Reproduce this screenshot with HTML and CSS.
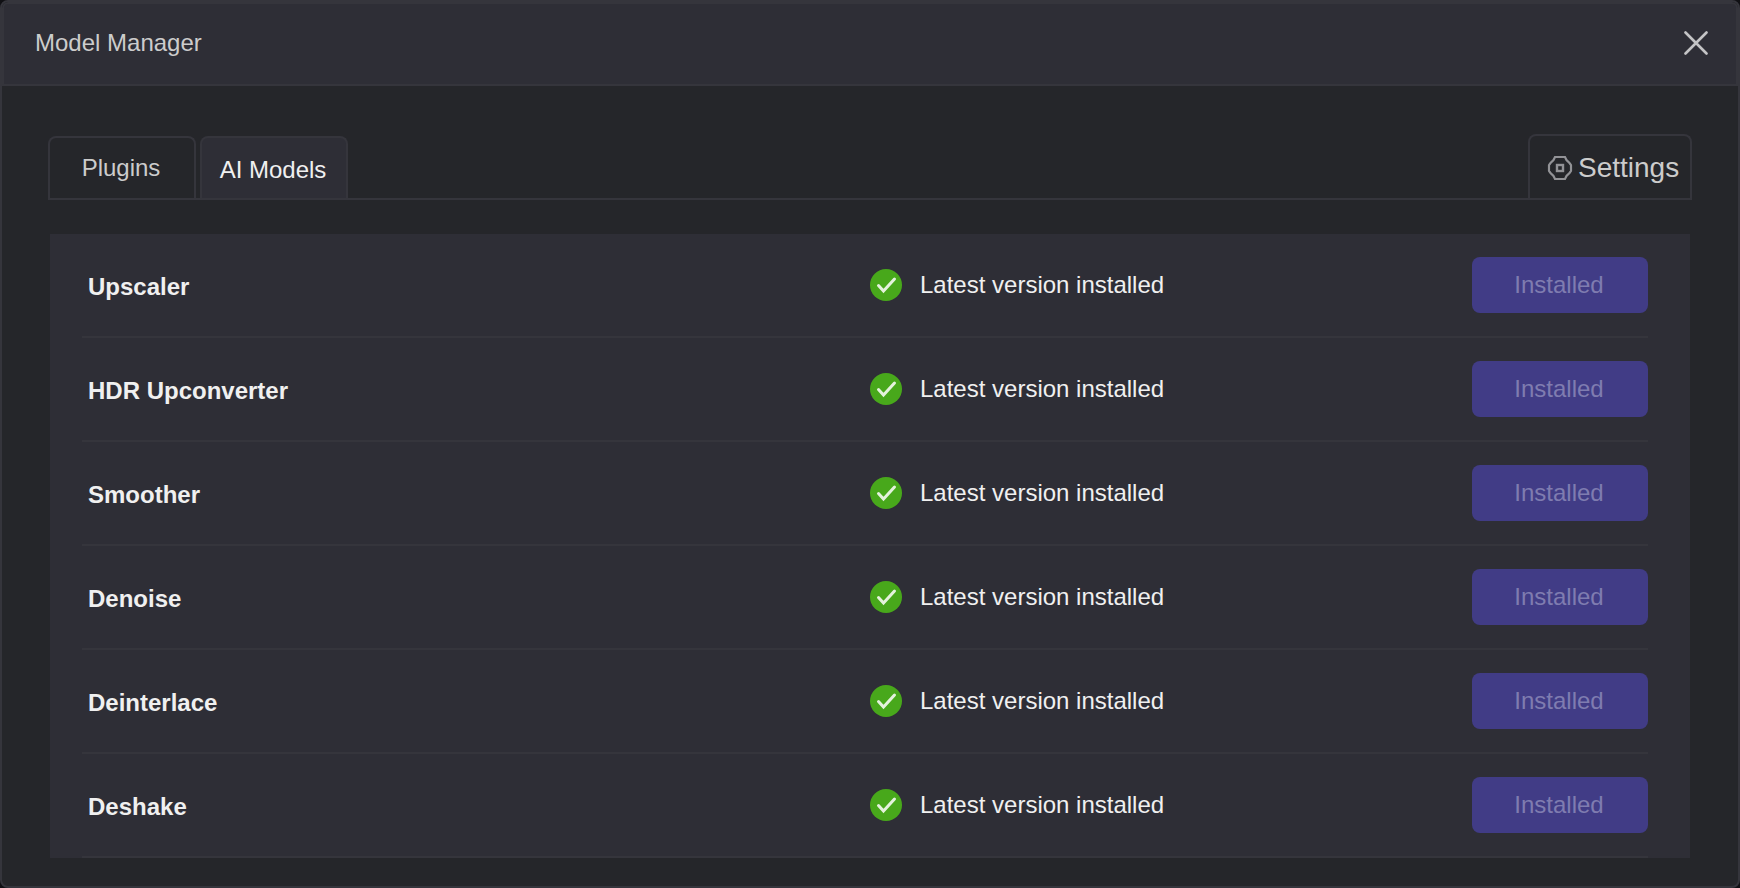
FILE: index.html
```
<!DOCTYPE html>
<html lang="en">
<head>
    <meta charset="UTF-8">
    <meta name="viewport" content="width=device-width, initial-scale=1.0">
    <title>Model Manager</title>
    <link rel="stylesheet" href="styles.css">
</head>
<body>
    <svg class="sprite" aria-hidden="true">
        <symbol id="check" viewBox="0 0 32 32">
            <circle cx="16" cy="16" r="16" fill="#48a81b"/>
            <path d="M8.5 16.5L13.5 22L24.5 10" fill="none" stroke="#e4f2dc" stroke-width="3" stroke-linecap="round"/>
        </symbol>
    </svg>

    <div class="window">
        <header class="header">
            <h1>Model Manager</h1>
            <button class="close" aria-label="Close">
                <svg width="24" height="24" viewBox="0 0 24 24">
                    <path d="M1.5 1.5L22.5 22.5M22.5 1.5L1.5 22.5" fill="none" stroke="#c4c4c6" stroke-width="2.6" stroke-linecap="round"/>
                </svg>
            </button>
        </header>

        <main class="content">
            <nav class="tabs">
                <button class="tab">Plugins</button>
                <button class="tab active">AI Models</button>
                <button class="tab settings">
                    <svg width="26" height="26" viewBox="0 0 26 26" fill="none" stroke="#929296">
                        <path d="M8 2H18L19.5 5L22.5 8L24 10V16L22.5 18L19.5 21L18 24H8L6.5 21L3.5 18L2 16V10L3.5 8L6.5 5Z" stroke-width="2.2"/>
                        <rect x="10" y="10" width="6" height="6" stroke-width="2.4"/>
                    </svg>
                    Settings
                </button>
            </nav>

            <div class="list">
                <div class="row">
                    <div class="name">Upscaler</div>
                    <div class="status"><svg class="check"><use href="#check"/></svg>Latest version installed</div>
                    <button class="install" disabled>Installed</button>
                </div>
                <div class="row">
                    <div class="name">HDR Upconverter</div>
                    <div class="status"><svg class="check"><use href="#check"/></svg>Latest version installed</div>
                    <button class="install" disabled>Installed</button>
                </div>
                <div class="row">
                    <div class="name">Smoother</div>
                    <div class="status"><svg class="check"><use href="#check"/></svg>Latest version installed</div>
                    <button class="install" disabled>Installed</button>
                </div>
                <div class="row">
                    <div class="name">Denoise</div>
                    <div class="status"><svg class="check"><use href="#check"/></svg>Latest version installed</div>
                    <button class="install" disabled>Installed</button>
                </div>
                <div class="row">
                    <div class="name">Deinterlace</div>
                    <div class="status"><svg class="check"><use href="#check"/></svg>Latest version installed</div>
                    <button class="install" disabled>Installed</button>
                </div>
                <div class="row">
                    <div class="name">Deshake</div>
                    <div class="status"><svg class="check"><use href="#check"/></svg>Latest version installed</div>
                    <button class="install" disabled>Installed</button>
                </div>
            </div>
        </main>
    </div>
</body>
</html>
```
FILE: styles.css
```
* {
    box-sizing: border-box;
}
body {
    margin: 0;
    background: #101014;
    color: #f0f0f0;
    font-family: "Liberation Sans", Arial, sans-serif;
    font-size: 24px;
    line-height: 28px;
}
button {
    font: inherit;
    cursor: pointer;
}
.sprite {
    display: none;
}
.window {
    min-height: 100vh;
    background: #25262a;
    border: 2px solid #35353c;
    border-radius: 8px;
    overflow: hidden;
}

/* title bar */
.header {
    display: flex;
    align-items: center;
    justify-content: space-between;
    height: 84px;
    padding: 0 28px 2px 31px;
    background: #2e2e36;
    border: 2px solid #35353c;
    border-radius: 6px 6px 0 0;
}
.header h1 {
    margin: 0;
    font-size: 24px;
    font-weight: normal;
    color: #cccccc;
}
.close {
    display: flex;
    padding: 0;
    background: none;
    border: none;
}

.content {
    padding: 48px 46px 26px;
}

/* tabs */
.tabs {
    display: flex;
    align-items: flex-end;
    gap: 4px;
    margin-bottom: 34px;
    border-bottom: 2px solid #35353c;
}
.tab {
    width: 148px;
    height: 62px;
    padding: 0 2px 0 0;
    background: none;
    border: 2px solid #35353c;
    border-bottom: none;
    border-radius: 8px 8px 0 0;
    color: #cccccc;
}
.tab.active {
    padding-top: 4px;
    background: #2e2e36;
    color: #f0f0f0;
}
.tab.settings {
    display: flex;
    align-items: center;
    gap: 5px;
    width: 164px;
    height: 64px;
    margin-left: auto;
    padding: 2px 0 0 17px;
    font-size: 28px;
}

/* model list */
.list {
    margin: 0 2px;
    padding: 0 42px 0 32px;
    background: #2e2e36;
}
.row {
    display: grid;
    grid-template-columns: 788fr 602fr 176px;
    align-items: center;
    height: 104px;
    border-bottom: 2px solid #35353c;
}
.name {
    padding: 4px 0 0 6px;
    font-weight: bold;
}
.status {
    display: flex;
    align-items: center;
    gap: 18px;
}
.check {
    width: 32px;
    height: 32px;
}
.install {
    height: 56px;
    padding: 0 2px 0 0;
    background: #413c86;
    border: none;
    border-radius: 8px;
    color: #7f7cb0;
    cursor: default;
}
```
